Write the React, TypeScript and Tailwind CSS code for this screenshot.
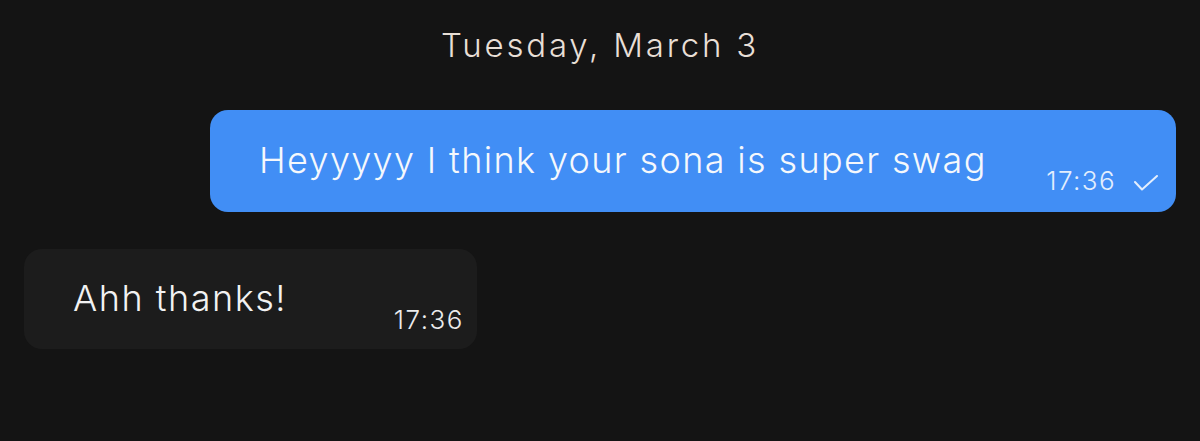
export default function App() {
  return (
    <div
      className="w-[1200px] h-[441px] bg-[#141414] overflow-hidden flex flex-col"
      style={{ fontFamily: "Inter, 'Noto Sans', sans-serif" }}
    >
      {/* Date header */}
      <div className="pt-[29px] flex justify-center">
        <p className="text-[33px] leading-[33px] font-[350] text-[#e8dfd6] tracking-[2.8px]">Tuesday, March 3</p>
      </div>

      {/* Outgoing */}
      <div className="mt-[48px] flex justify-end pr-[24px]">
        <div className="w-[966px] h-[102px] rounded-[18px] bg-[#418ef5] flex items-end pl-[49px] pr-[18px] pb-[18px]">
          <p className="text-[36px] leading-[40px] font-[350] tracking-[1.35px] text-[#f5f8fc] mb-[14px] flex-1">
            Heyyyyy I think your sona is super swag
          </p>
          <div className="flex items-center gap-[18px]">
            <span className="text-[26px] leading-[26px] font-[350] tracking-[1.4px] text-[#e3eefd]">17:36</span>
            <svg width="24" height="16" viewBox="0 0 24 16" fill="none" className="mt-[4px]">
              <polyline
                points="1,7 8,14.5 23,1"
                stroke="#e3eefd"
                strokeWidth="2"
                strokeLinecap="round"
                strokeLinejoin="round"
              />
            </svg>
          </div>
        </div>
      </div>

      {/* Incoming */}
      <div className="mt-[37px] flex justify-start pl-[24px]">
        <div className="w-[453px] h-[100px] rounded-[18px] bg-[#1c1c1c] flex items-end pl-[49px] pr-[13px] pb-[16px]">
          <p className="text-[36px] leading-[40px] font-[350] tracking-[1.5px] text-[#f2f2f2] mb-[15px] flex-1">Ahh thanks!</p>
          <span className="text-[26px] leading-[26px] font-[350] tracking-[1.5px] text-[#ececec]">17:36</span>
        </div>
      </div>
    </div>
  );
}
